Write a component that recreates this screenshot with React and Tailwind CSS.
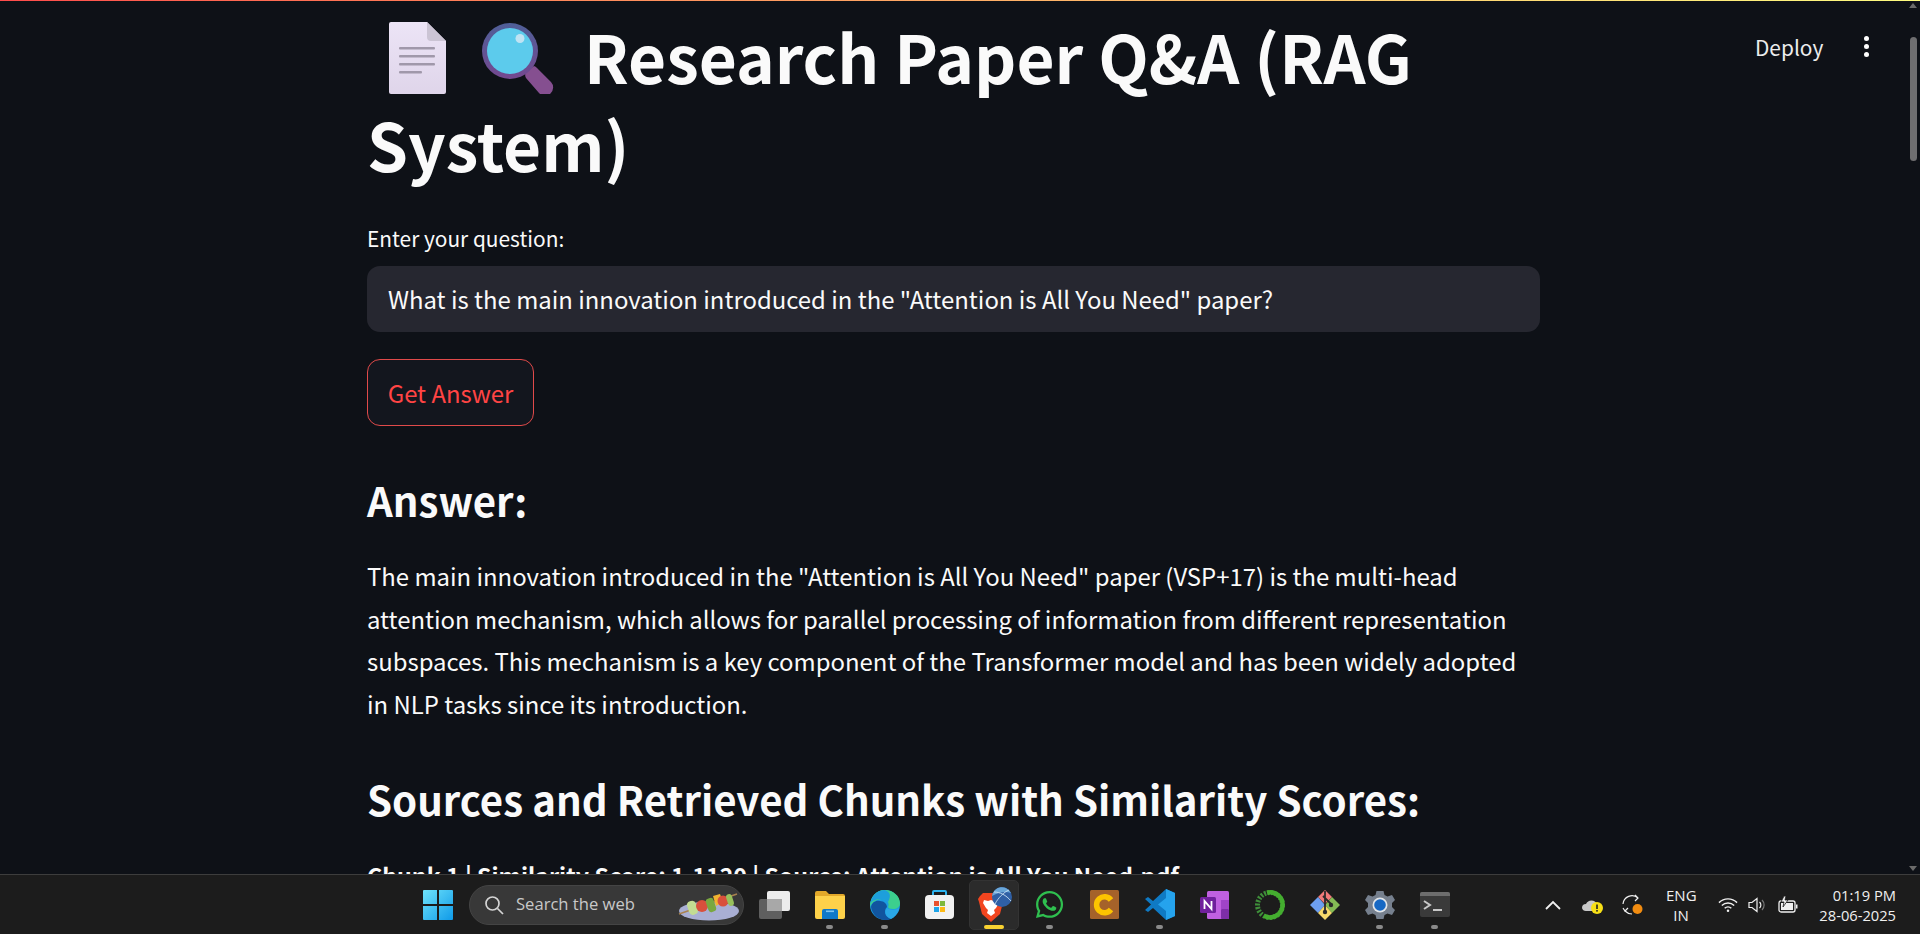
import React from "react";
import { FaWhatsapp } from "react-icons/fa";

const cjk = "font-['Noto_Sans_CJK_JP','Source_Sans_Pro',sans-serif]";

function DocEmoji() {
  return (
    <svg width="57" height="72" viewBox="0 0 57 72" className="shrink-0">
      <defs>
        <linearGradient id="docBg" x1="0" y1="0" x2="0" y2="1">
          <stop offset="0" stopColor="#ece4f6" />
          <stop offset="1" stopColor="#dfd5ea" />
        </linearGradient>
      </defs>
      <path d="M2 0h36l19 19v51a2 2 0 0 1-2 2H2a2 2 0 0 1-2-2V2a2 2 0 0 1 2-2z" fill="url(#docBg)" />
      <path d="M38 0l19 19H42a4 4 0 0 1-4-4z" fill="#cbc4d4" />
      <g fill="#a098aa">
        <rect x="10" y="25" width="36" height="2.600" rx="1" />
        <rect x="10" y="33" width="36" height="2.600" rx="1" />
        <rect x="10" y="41" width="36" height="2.600" rx="1" />
        <rect x="10" y="49" width="23" height="2.600" rx="1" />
      </g>
    </svg>
  );
}

function LensEmoji() {
  return (
    <svg width="72" height="71" viewBox="0 0 72 71" className="shrink-0">
      <defs>
        <linearGradient id="lensRim" x1="0" y1="0" x2="0" y2="1">
          <stop offset="0" stopColor="#4f5f98" />
          <stop offset="1" stopColor="#74488f" />
        </linearGradient>
      </defs>
      <path d="M44 49l8-6a6 6 0 0 1 3 2l14 14a8 8 0 0 1-12 11L44 55a6 6 0 0 1 0-6z" fill="#854f90" />
      <circle cx="28" cy="28" r="28" fill="url(#lensRim)" />
      <circle cx="28" cy="28" r="23" fill="#5ccbec" />
      <circle cx="38" cy="15.500" r="4.500" fill="#c0e3f3" />
    </svg>
  );
}

function WindowsLogo() {
  return (
    <svg width="30" height="30" viewBox="0 0 30 30">
      <defs>
        <linearGradient id="win" x1="0" y1="0" x2="1" y2="1">
          <stop offset="0" stopColor="#6fe3fb" />
          <stop offset="1" stopColor="#0f9ae8" />
        </linearGradient>
      </defs>
      <path d="M1 0h13v14H0V1a1 1 0 0 1 1-1zM16 0h13a1 1 0 0 1 1 1v13H16zM0 16h14v14H1a1 1 0 0 1-1-1zM16 16h14v13a1 1 0 0 1-1 1H16z" fill="url(#win)" />
    </svg>
  );
}

function KebabPlate() {
  return (
    <svg width="62" height="30" viewBox="0 0 62 30">
      <ellipse cx="32" cy="20" rx="30" ry="9.500" fill="#a9afd4" />
      <path d="M2 23L60 3" stroke="#a9824f" strokeWidth="1.500" />
      <rect x="11" y="10" width="9" height="14" rx="4" fill="#c3dc93" transform="rotate(-18 15 17)" />
      <circle cx="25" cy="15" r="6" fill="#d9503c" />
      <rect x="30" y="7" width="8" height="14" rx="3" fill="#79a83f" transform="rotate(-18 34 14)" />
      <path d="M36 5l7-2 3 8-7 4z" fill="#f2b330" />
      <circle cx="46" cy="10" r="5.500" fill="#d9503c" />
      <rect x="50" y="3" width="6" height="12" rx="3" fill="#98c05c" transform="rotate(-18 53 9)" />
    </svg>
  );
}

function TaskView() {
  return (
    <svg width="31" height="28" viewBox="0 0 31 28">
      <rect x="0" y="8" width="23" height="20" rx="2" fill="#5f5f5f" />
      <rect x="8" y="0" width="23" height="20" rx="2" fill="#ececec" />
      <rect x="8" y="8" width="15" height="12" fill="#a8a8a8" />
    </svg>
  );
}

function Explorer() {
  return (
    <svg width="30" height="28" viewBox="0 0 30 28">
      <path d="M0 2a2 2 0 0 1 2-2h9l3 3h14a2 2 0 0 1 2 2v3H0z" fill="#e2a82a" />
      <path d="M0 5h30v21a2 2 0 0 1-2 2H2a2 2 0 0 1-2-2z" fill="#fdd14a" />
      <path d="M7 20a2 2 0 0 1 2-2h12a2 2 0 0 1 2 2v8H7z" fill="#0f78c8" />
      <rect x="11" y="19.500" width="8" height="1.600" fill="#7fc4f0" />
    </svg>
  );
}

function Edge() {
  return (
    <svg width="30" height="30" viewBox="0 0 30 30">
      <circle cx="15" cy="15" r="15" fill="#1b9de2" />
      <path d="M15 0c8 0 15 6 15 13 0 4-3 6-7 6-3 0-5-1-5-2 2-4-1-8-6-8C7 9 2 12 0 17 0 7 6 0 15 0z" fill="#3ccf8e" />
      <path d="M15 0C8 0 2 5 .5 13 3 10 7 9 10 9c3 0 6 1 8 3C20 8 22 3 15 0z" fill="#1d9fdc" />
      <path d="M1 17c1-5 5-7 9-6 4 0 7 3 7 6-4 4-2 10 4 12-2 1-4 1-6 1C8 30 2 24 1 17z" fill="#11559f" />
      <path d="M17 18c2 2 8 3 12 0-1 5-4 9-8 11-5-2-7-7-4-11z" fill="#2aa7e6" />
    </svg>
  );
}

function Store() {
  return (
    <svg width="29" height="29" viewBox="0 0 29 29">
      <path d="M8 6V2a1 1 0 0 1 1-1h11a1 1 0 0 1 1 1v4" fill="none" stroke="#2db4f0" strokeWidth="2" />
      <rect x="0" y="5" width="29" height="24" rx="4" fill="#f1f1f1" />
      <rect x="9" y="11" width="5" height="5" fill="#e8502c" />
      <rect x="15" y="11" width="5" height="5" fill="#7db83c" />
      <rect x="9" y="17" width="5" height="5" fill="#1ea4e8" />
      <rect x="15" y="17" width="5" height="5" fill="#fbb916" />
    </svg>
  );
}

function Brave() {
  return (
    <svg width="34" height="36" viewBox="0 0 34 36">
      <path d="M5 6h16l3 3 2 3-1 3-3 12-9 8-9-8-3-12-1-3 2-3z" fill="#f2451f" />
      <path d="M6 13l4 1 3-1 3 1 4-1 1 3-3 5-2 2 1 3-4 3-4-3 1-3-2-2-3-5z" fill="#fff" />
      <circle cx="24" cy="10" r="10" fill="#2f5fa5" />
      <path d="M14 9a10 10 0 0 1 19-3c-5-2-12-1-19 3z" fill="#6aa6d8" />
      <path d="M17 17C20 11 26 5 31 3M16 5c6 0 12 3 17 9" stroke="#c7e0f2" strokeWidth="0.900" fill="none" />
    </svg>
  );
}

function CApp() {
  return (
    <svg width="29" height="29" viewBox="0 0 29 29">
      <rect width="29" height="29" rx="1.500" fill="#a5622a" />
      <path d="M21 10a8 8 0 1 0 0 9.500" fill="none" stroke="#fdc400" strokeWidth="5.500" />
    </svg>
  );
}

function VSCode() {
  return (
    <svg width="30" height="31" viewBox="0 0 30 31">
      <path d="M21 0l9 4v23l-9 4L8 19l-5 4-3-2 6-5.500L0 10l3-2 5 4z" fill="#0f7ac4" />
      <path d="M21 0l9 4v23l-9 4V22l-8-6.500L21 9z" fill="#25a3ed" />
    </svg>
  );
}

function OneNote() {
  return (
    <svg width="29" height="28" viewBox="0 0 29 28">
      <rect x="7" y="0" width="22" height="28" rx="1.500" fill="#c060e0" />
      <rect x="21" y="9" width="8" height="9" fill="#a044c8" />
      <rect x="21" y="18" width="8" height="10" rx="1" fill="#7e2ea8" />
      <rect x="0" y="6" width="16" height="16" rx="1.500" fill="#70209c" />
      <path d="M4.500 18v-8l7 8v-8" stroke="#fff" strokeWidth="1.800" fill="none" />
    </svg>
  );
}

function GreenRing() {
  return (
    <svg width="30" height="30" viewBox="0 0 30 30">
      <circle cx="15" cy="15" r="12.500" fill="none" stroke="#3f8f3a" strokeWidth="5" strokeDasharray="2 1.500" />
      <path d="M12 2.800a12.500 12.500 0 1 1-3 23" fill="none" stroke="#44ad2f" strokeWidth="4.500" />
    </svg>
  );
}

function GitApp() {
  return (
    <svg width="30" height="30" viewBox="0 0 30 30">
      <path d="M15 0l7 7-7 7-7-7z" fill="#f17a7a" />
      <path d="M22 7l8 8-8 8-7-8z" fill="#85bb55" />
      <path d="M8 7l7 8-7 8-8-8z" fill="#6d9ff0" />
      <path d="M15 15l7 8-7 7-7-7z" fill="#f7d96b" />
      <path d="M15 1v22M13 6l8 8" stroke="#2a2a2a" strokeWidth="1.800" fill="none" />
      <circle cx="15" cy="22" r="2.200" fill="#2a2a2a" />
      <circle cx="21" cy="15" r="2.200" fill="#2a2a2a" />
    </svg>
  );
}

function Gear() {
  return (
    <svg width="30" height="28" viewBox="0 0 30 28">
      <path d="M11.500 0h7l1 4 3 1.500L27 4l3 5-3 3v4l3 3-3 5-4.500-1.500-3 1.500-1 4h-7l-1-4-3-1.500L3 24l-3-5 3-3v-4L0 9l3-5 4.500 1.500 3-1.500z" fill="#76808e" />
      <circle cx="15" cy="14" r="7.500" fill="#e2e6ea" />
      <circle cx="15" cy="14" r="5.800" fill="#1668c4" />
    </svg>
  );
}

function TerminalApp() {
  return (
    <svg width="30" height="25" viewBox="0 0 30 25">
      <rect width="30" height="25" rx="2" fill="#3a3a3a" />
      <path d="M2 0h26a2 2 0 0 1 2 2v2H0V2a2 2 0 0 1 2-2z" fill="#6d6d6d" />
      <path d="M4 9l6 4-6 4" fill="none" stroke="#c8c8c8" strokeWidth="2" />
      <rect x="13" y="17" width="9" height="2" fill="#c8c8c8" />
    </svg>
  );
}

const taskIcons = [
  { el: <TaskView /> },
  { el: <Explorer />, dot: true },
  { el: <Edge />, dot: true },
  { el: <Store /> },
  { el: <Brave />, active: true },
  { el: <FaWhatsapp className="text-[#2fbf4f]" size={31} />, dot: true },
  { el: <CApp /> },
  { el: <VSCode />, dot: true },
  { el: <OneNote /> },
  { el: <GreenRing /> },
  { el: <GitApp /> },
  { el: <Gear />, dot: true },
  { el: <TerminalApp />, dot: true },
];

function Taskbar() {
  return (
    <div className="h-[60px] shrink-0 border-t border-[#3d3d3d] bg-[#1c1c1c] flex items-center pl-[412px] font-['Open_Sans',sans-serif] text-white">
      <div className="w-[51px] flex justify-center">
        <WindowsLogo />
      </div>
      <div className="ml-[6px] w-[275px] h-[40px] rounded-full bg-[#383838] border border-[#444] flex items-center pl-[14px] relative">
        <svg width="20" height="20" viewBox="0 0 20 20" fill="none" stroke="#d4d4d4" strokeWidth="1.700">
          <circle cx="8.500" cy="8.500" r="6.500" />
          <path d="M13.500 13.500L19 19" />
        </svg>
        <span className="ml-[12px] text-[16.600px] text-[#c8c8c8]">Search the web</span>
        <div className="absolute right-[4px] top-[5px]">
          <KebabPlate />
        </div>
      </div>
      <div className="ml-[3px] flex">
        {taskIcons.map((t, i) => (
          <div key={i} className="w-[55px] h-[50px] relative flex items-center justify-center">
            {t.active && <div className="absolute left-[2px] right-[3px] top-0 bottom-0 rounded-[5px] bg-[#2b2b2b] border border-[#333]" />}
            <div className="relative flex">{t.el}</div>
            {t.dot && <div className="absolute bottom-[1px] left-[24px] w-[7px] h-[4px] rounded-full bg-[#8a8a8a]" />}
            {t.active && <div className="absolute bottom-[1px] left-[17px] w-[20px] h-[4px] rounded-full bg-[#f9d231]" />}
          </div>
        ))}
      </div>
      <div className="ml-auto flex items-center pr-[24px]">
        <svg width="16" height="10" viewBox="0 0 16 10" fill="none" stroke="#f0f0f0" strokeWidth="1.800" className="mr-[21px]">
          <path d="M1 9l7-7 7 7" />
        </svg>
        <svg width="22" height="20" viewBox="0 0 22 20" className="mr-[18px]">
          <path d="M0 13a4 4 0 0 1 4-4 6 6 0 0 1 11 0v7H4a4 4 0 0 1-4-3z" fill="#c8c8c8" />
          <circle cx="15" cy="13" r="6" fill="#f7e017" />
          <rect x="14.200" y="9.500" width="1.600" height="4.500" fill="#222" />
          <rect x="14.200" y="15" width="1.600" height="1.600" fill="#222" />
        </svg>
        <svg width="22" height="22" viewBox="0 0 22 22" fill="none" stroke="#f0f0f0" strokeWidth="1.200" className="mr-[22px]">
          <path d="M1 10a9 9 0 0 1 15-6M13 1l3 3-3 3M1 14l2 3 3-3" />
          <path d="M3 17c2 2 4 3 7 3" />
          <circle cx="15.500" cy="15" r="5" fill="#f28c10" stroke="none" />
        </svg>
        <div className="w-[30px] text-center text-[15px] leading-[20px] text-[#f0f0f0]">
          <div>ENG</div>
          <div>IN</div>
        </div>
        <svg width="20" height="16" viewBox="0 0 21 16" fill="none" stroke="#f0f0f0" strokeWidth="1.500" className="ml-[22px]">
          <path d="M1 5.500a13.500 13.500 0 0 1 19 0M4 8.500a9.500 9.500 0 0 1 13 0M7 11.500a5 5 0 0 1 7 0" />
          <circle cx="10.500" cy="14" r="1.300" fill="#f0f0f0" stroke="none" />
        </svg>
        <svg width="20" height="16" viewBox="0 0 20 16" fill="none" stroke="#f0f0f0" strokeWidth="1.200" className="ml-[10px]">
          <path d="M1 5.500h3L9 1.500v13l-5-4H1z" />
          <path d="M11.500 5a4 4 0 0 1 0 6" />
          <path d="M14 3a7 7 0 0 1 0 10" stroke="#777" />
        </svg>
        <svg width="20" height="18" viewBox="0 0 20 18" className="ml-[10px]">
          <rect x="1" y="5" width="16" height="11" rx="2" fill="none" stroke="#f0f0f0" strokeWidth="1.300" />
          <rect x="3" y="7" width="12" height="7" fill="#f0f0f0" />
          <rect x="18" y="8.500" width="1.500" height="4" fill="#f0f0f0" />
          <path d="M6 0L3 6h3l-1 5 5-7H7l1-4z" fill="#f0f0f0" stroke="#1c1c1c" strokeWidth="0.800" />
        </svg>
        <div className="ml-[21px] w-[77px] text-right text-[14.700px] leading-[20px] text-[#f0f0f0] whitespace-nowrap">
          <div>01:19 PM</div>
          <div>28-06-2025</div>
        </div>
      </div>
    </div>
  );
}

export default function App() {
  return (
    <div className={`h-[934px] w-[1920px] flex flex-col overflow-hidden bg-[#0e1117] text-[#fafafa] relative ${cjk}`}>
      <div className="h-px shrink-0 bg-gradient-to-r from-[#ff4b4b] to-[#fffd80]" />
      <div className="flex-1 min-h-0 overflow-hidden pl-[367px] pr-[380px]">
        <h1 className="mt-[11px] text-[65.700px] leading-[88px] font-bold">
          <span className="inline-flex items-end gap-[36px] ml-[22px] mr-[30px] align-[-10px]">
            <DocEmoji />
            <LensEmoji />
          </span>
          Research Paper Q&amp;A (RAG System)
        </h1>
        <label className="block mt-[34px] text-[20.900px] leading-[32px]">Enter your question:</label>
        <div className="mt-[12px] h-[66px] rounded-[13px] bg-[#262730] flex items-center pl-[21px] text-[23.900px]">
          What is the main innovation introduced in the "Attention is All You Need" paper?
        </div>
        <button className="mt-[27px] block h-[67px] w-[167px] rounded-[13px] border border-[#e04a4a] bg-[#13161e] text-[23.900px] text-[#ff4444]">
          Get Answer
        </button>
        <h3 className="mt-[43.500px] text-[40.200px] leading-[60px] font-semibold">Answer:</h3>
        <p className="mt-[25.500px] text-[23.900px] leading-[42.600px]">
          The main innovation introduced in the "Attention is All You Need" paper (VSP+17) is the multi-head attention mechanism, which allows for parallel processing of information from different representation subspaces. This mechanism is a key component of the Transformer model and has been widely adopted in NLP tasks since its introduction.
        </p>
        <h3 className="mt-[43.500px] text-[40.200px] leading-[60px] font-semibold">Sources and Retrieved Chunks with Similarity Scores:</h3>
        <p className="mt-[25.500px] text-[23.200px] leading-[42.600px] font-semibold">
          Chunk 1 | Similarity Score: 1.1120 | Source: Attention is All You Need.pdf
        </p>
      </div>
      <Taskbar />

      {/* deploy bar and scrollbar float over the page */}
      <div className="absolute top-[31px] left-[1755px] text-[20.900px] leading-[32px] text-[#ececec]">Deploy</div>
      <div className="absolute left-[1864px] top-[36px] flex flex-col gap-[3px]">
        <div className="w-[5px] h-[5px] rounded-full bg-white" />
        <div className="w-[5px] h-[5px] rounded-full bg-white" />
        <div className="w-[5px] h-[5px] rounded-full bg-white" />
      </div>
      <div className="absolute left-[1909px] top-[3px] w-0 h-0 border-x-[4px] border-x-transparent border-b-[5px] border-b-[#6b6b6b]" />
      <div className="absolute left-[1910px] top-[37px] w-[7px] h-[124px] rounded-full bg-[#6e6e70]" />
      <div className="absolute left-[1909px] top-[866px] w-0 h-0 border-x-[4px] border-x-transparent border-t-[5px] border-t-[#6b6b6b]" />
    </div>
  );
}
